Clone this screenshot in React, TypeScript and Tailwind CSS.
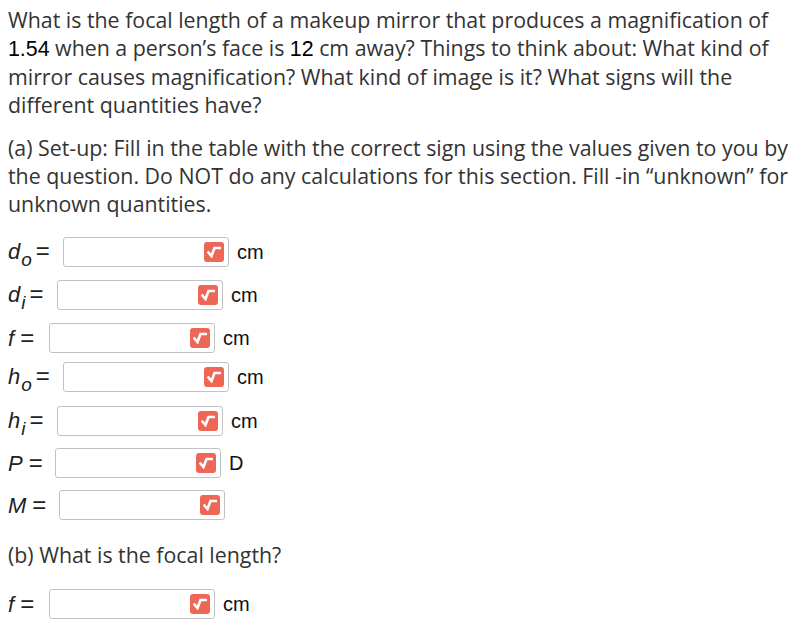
import React from 'react';

const SqrtIcon: React.FC = () => (
  <div className="w-[20px] h-[20px] rounded-[3px] bg-[#ee6656] flex items-center justify-center shrink-0">
    <svg width="14" height="12" viewBox="0 0 14 12" fill="none">
      <path d="M1.5 6.5 L4.5 10 L7.5 2 L13 2" stroke="white" strokeWidth="2.6" strokeLinecap="square" strokeLinejoin="miter" />
    </svg>
  </div>
);

const AnswerBox: React.FC = () => (
  <div className="w-[166px] h-[30px] border-[1.5px] border-[#c2c2c2] rounded-[3px] bg-white flex items-center justify-end pr-[4px]">
    <SqrtIcon />
  </div>
);

type RowProps = {
  sym: string;
  sub?: string;
  unit?: string;
  mt: string;
  lw: string;
};

const Row: React.FC<RowProps> = ({ sym, sub, unit, mt, lw }) => (
  <div className={`flex items-center h-[30px] ${mt}`}>
    <div className={`flex items-baseline shrink-0 text-[22px] text-[#222] font-['Liberation_Sans',Arial,sans-serif] pl-[8px] ${lw}`}>
      <span className="italic">{sym}</span>
      {sub && <span className="italic text-[19px] relative top-[7px] ml-[1px]">{sub}</span>}
      <span className={`text-[24px] ${sub ? 'ml-[4px]' : 'ml-[6px]'}`}>=</span>
    </div>
    <AnswerBox />
    {unit && (
      <span className="ml-[8px] text-[20px] text-[#111] font-['Liberation_Sans',Arial,sans-serif]">{unit}</span>
    )}
  </div>
);

const App: React.FC = () => {
  return (
    <div className="w-[798px] h-[630px] bg-white text-[#333] font-['Open_Sans',sans-serif] text-[21.35px] leading-[28px] pl-[8px] pt-[6px] overflow-hidden">
      <p className="whitespace-nowrap">
        What is the focal length of a makeup mirror that produces a magnification of
        <br />
        <span className="font-['Liberation_Sans',Arial,sans-serif] text-black">1.54</span> when a person’s face is{' '}
        <span className="font-['Liberation_Sans',Arial,sans-serif] text-black">12</span> cm away? Things to think about: What kind of
        <br />
        mirror causes magnification? What kind of image is it? What signs will the
        <br />
        different quantities have?
      </p>
      <p className="mt-[15px] whitespace-nowrap">
        (a) Set-up: Fill in the table with the correct sign using the values given to you by
        <br />
        the question. Do NOT do any calculations for this section. Fill -in “unknown” for
        <br />
        unknown quantities.
      </p>

      <div className="-ml-[8px]">
        <Row sym="d" sub="o" unit="cm" mt="mt-[19px]" lw="w-[63px]" />
        <Row sym="d" sub="i" unit="cm" mt="mt-[13px]" lw="w-[57px]" />
        <Row sym="f" unit="cm" mt="mt-[13px]" lw="w-[49px]" />
        <Row sym="h" sub="o" unit="cm" mt="mt-[9px]" lw="w-[63px]" />
        <Row sym="h" sub="i" unit="cm" mt="mt-[14px]" lw="w-[57px]" />
        <Row sym="P" unit="D" mt="mt-[12px]" lw="w-[55px]" />
        <Row sym="M" mt="mt-[12px]" lw="w-[59px]" />
      </div>

      <p className="mt-[21px]">(b) What is the focal length?</p>

      <div className="-ml-[8px]">
        <Row sym="f" unit="cm" mt="mt-[20px]" lw="w-[49px]" />
      </div>
    </div>
  );
};

export default App;
